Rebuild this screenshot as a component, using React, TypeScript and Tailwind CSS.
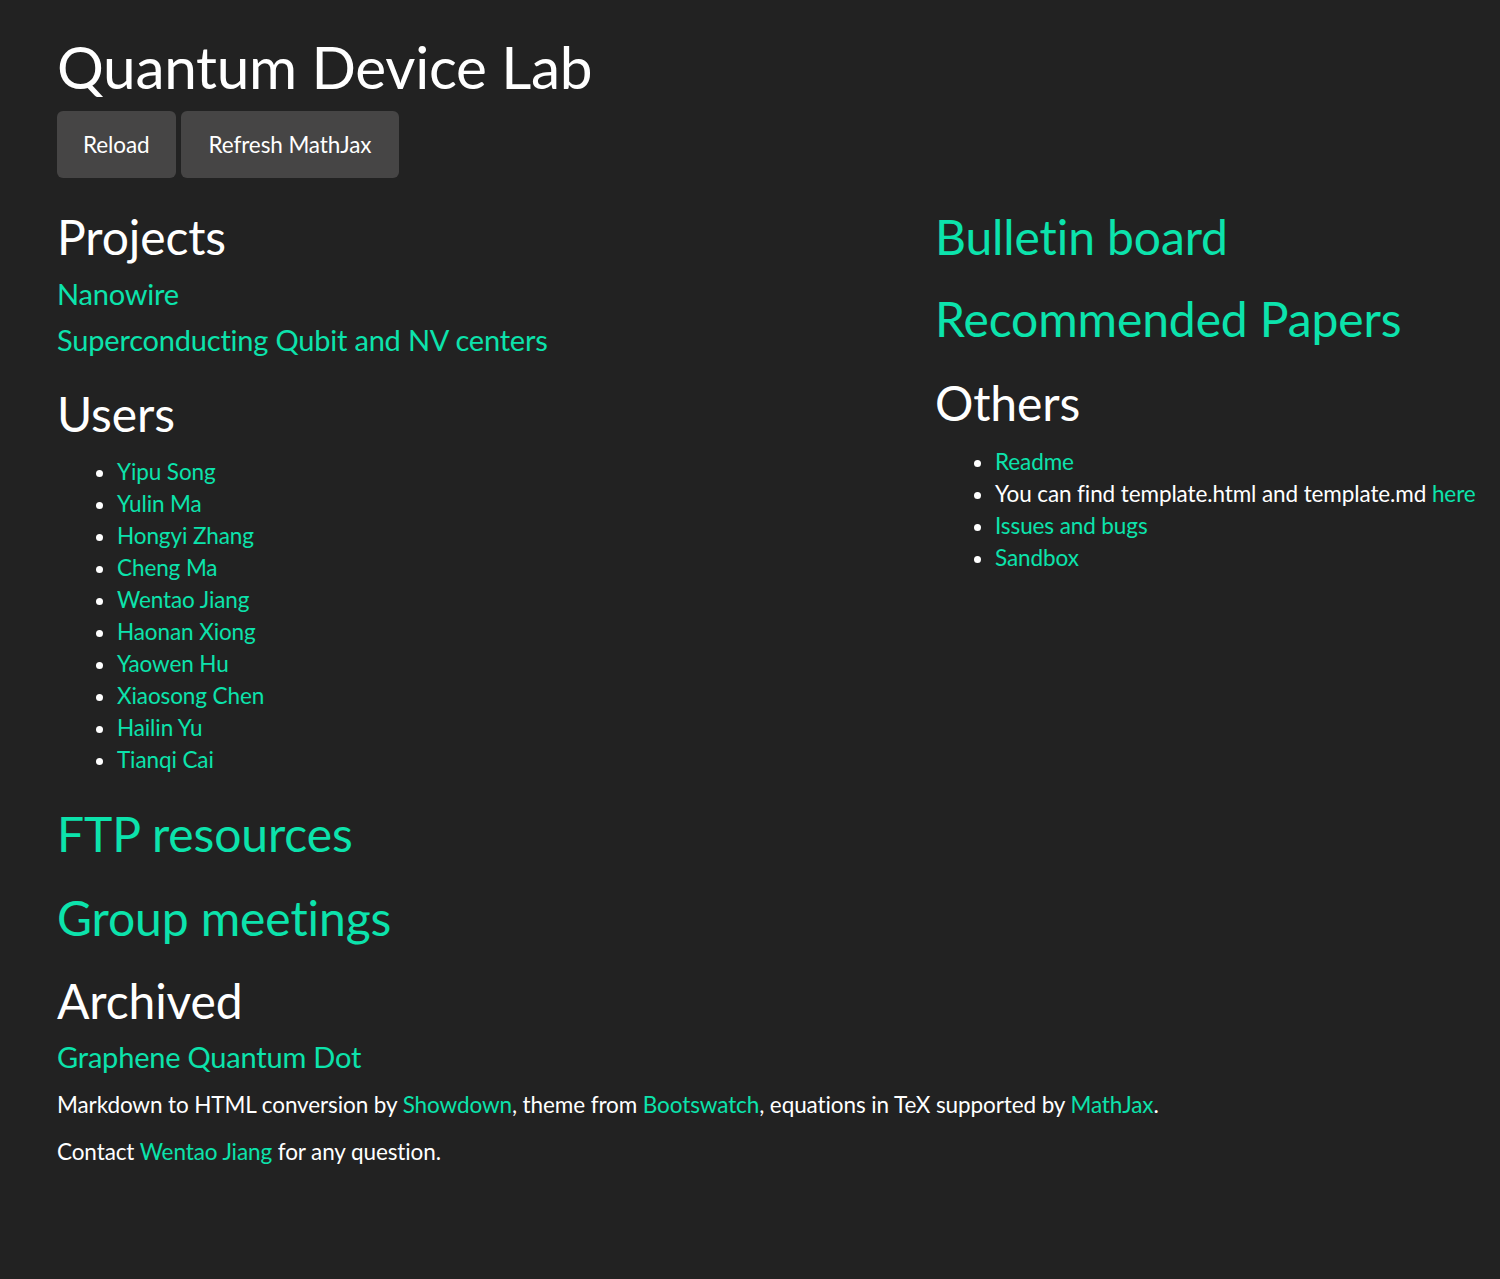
const users = [
  'Yipu Song',
  'Yulin Ma',
  'Hongyi Zhang',
  'Cheng Ma',
  'Wentao Jiang',
  'Haonan Xiong',
  'Yaowen Hu',
  'Xiaosong Chen',
  'Hailin Yu',
  'Tianqi Cai',
]

function Link({ children, className = '' }: { children: React.ReactNode; className?: string }) {
  return (
    <a href="#" className={`text-[#0ce3ac] no-underline ${className}`}>
      {children}
    </a>
  )
}

function H2({ children, className = '' }: { children: React.ReactNode; className?: string }) {
  return <h2 className={`text-[48px] leading-[53px] font-normal ${className}`}>{children}</h2>
}

export default function App() {
  return (
    <div className="min-h-[1279px] bg-[#222222] px-[57px] pt-[34px] text-white font-['Lato','Liberation_Sans',sans-serif] text-[22.5px] leading-[32px] tracking-[-0.1px]">
      <h1 className="text-[58.5px] leading-[64px] font-normal tracking-[-0.3px]">Quantum Device Lab</h1>

      <div className="mt-[13px] flex gap-[5px]">
        <button className="h-[67px] rounded-[6px] bg-[#464545] px-[26px] text-white">Reload</button>
        <button className="h-[67px] rounded-[6px] bg-[#464545] px-[28px] text-white">Refresh MathJax</button>
      </div>

      <div className="mt-[32px] flex">
        {/* left column */}
        <div className="w-[878px] shrink-0">
          <H2>Projects</H2>
          <div className="mt-[8px] text-[29px] leading-[46px] tracking-[-0.2px]">
            <Link>Nanowire</Link>
            <br />
            <Link>Superconducting Qubit and NV centers</Link>
          </div>

          <H2 className="mt-[24px]">Users</H2>
          <ul className="mt-[16px] list-disc pl-[60px]">
            {users.map((u) => (
              <li key={u}>
                <Link>{u}</Link>
              </li>
            ))}
          </ul>
        </div>

        {/* right column */}
        <div className="flex-1 whitespace-nowrap">
          <H2>
            <Link>Bulletin board</Link>
          </H2>
          <H2 className="mt-[29px]">
            <Link>Recommended Papers</Link>
          </H2>
          <H2 className="mt-[31px]">Others</H2>
          <ul className="mt-[17px] list-disc pl-[60px]">
            <li>
              <Link>Readme</Link>
            </li>
            <li>
              You can find template.html and template.md <Link>here</Link>
            </li>
            <li>
              <Link>Issues and bugs</Link>
            </li>
            <li>
              <Link>Sandbox</Link>
            </li>
          </ul>
        </div>
      </div>

      <H2 className="mt-[31px]">
        <Link>FTP resources</Link>
      </H2>
      <H2 className="mt-[31px]">
        <Link>Group meetings</Link>
      </H2>
      <H2 className="mt-[30px]">Archived</H2>
      <div className="mt-[7px] text-[29px] leading-[46px] tracking-[-0.2px]">
        <Link>Graphene Quantum Dot</Link>
      </div>
      <p className="mt-[9px]">
        Markdown to HTML conversion by <Link>Showdown</Link>, theme from <Link>Bootswatch</Link>, equations in TeX
        supported by <Link>MathJax</Link>.
      </p>
      <p className="mt-[15px]">
        Contact <Link>Wentao Jiang</Link> for any question.
      </p>
    </div>
  )
}
